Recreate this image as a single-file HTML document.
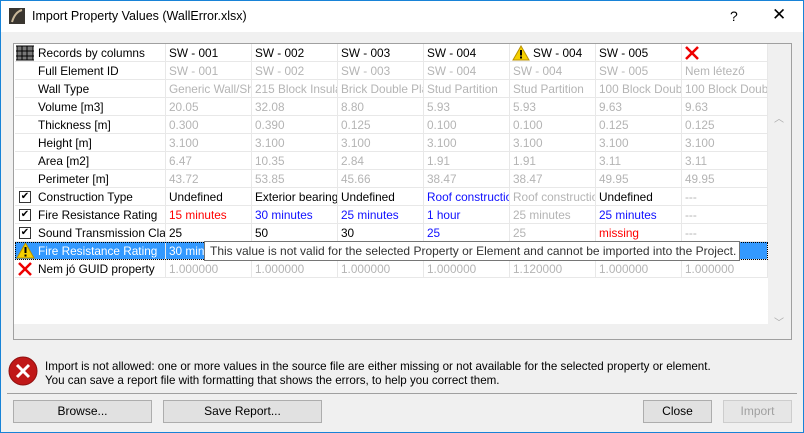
<!DOCTYPE html>
<html><head><style>
*{margin:0;padding:0;box-sizing:border-box}
body{width:804px;height:433px;overflow:hidden;background:#f0f0f0;font-family:"Liberation Sans",sans-serif;font-size:12px;position:relative}
.win{position:absolute;left:0;top:0;width:804px;height:433px;border:1px solid #1883d7;background:#f0f0f0}
.title{position:absolute;left:0;top:0;width:802px;height:31px;background:#fff}
.title span{position:absolute;left:31px;top:8px;font-size:12.5px;color:#000}
.abs{position:absolute}
.grid{position:absolute;left:12px;top:42px;width:779px;height:297px;border:1px solid #a0a0a0;background:#fff;overflow:hidden}
.row{position:absolute;left:1px;height:18px;width:752px}
.c{position:absolute;top:0;height:18px;line-height:18px;white-space:nowrap;overflow:hidden;border-right:1px solid #e8e8e8;border-bottom:1px solid #e8e8e8;padding-left:3px;font-size:11.8px}
.lab{left:20px;width:131px;color:#000;padding-left:3px}
.ic{left:0;width:20px}
.g{color:#b4b4b4}.b{color:#1010ff}.r{color:#ff0000}.k{color:#000}
.btn{position:absolute;height:23px;border:1px solid #adadad;background:#e1e1e1;text-align:center;line-height:21px;font-size:12px}
.chk{position:absolute;left:4px;top:3px;width:12px;height:12px;border:1px solid #333;background:#fff;font-size:10px;line-height:10px;text-align:center}
</style></head><body>
<div class="win">
<div class="title">
<svg class="abs" style="left:8px;top:7px" width="16" height="16"><rect width="16" height="16" fill="#3a3630"/><path d="M3 14 Q6 4 13 2" stroke="#c9b89a" stroke-width="2" fill="none"/></svg>
<span>Import Property Values (WallError.xlsx)</span>
<div class="abs" style="left:729px;top:7px;font-size:14px">?</div>
<div class="abs" style="left:771px;top:4px;font-size:17px">✕</div>
</div>
<div class="grid">
<div id="rows"></div>
<div class="abs" style="left:754px;top:0;width:24px;height:295px;background:#f0f0f0"></div>
<div class="abs" style="left:760px;top:66px;color:#aaa;font-size:10px">︿</div>
<div class="abs" style="left:760px;top:270px;color:#aaa;font-size:10px">﹀</div>
<div class="abs" style="left:0;top:280px;width:754px;height:16px;background:#f0f0f0"></div>
</div>
<svg class="abs" style="left:7px;top:355px" width="30" height="30"><circle cx="15" cy="15" r="14" fill="#c01818" stroke="#901010"/><path d="M9 9L21 21M21 9L9 21" stroke="#fff" stroke-width="3"/></svg>
<div class="abs" style="left:44px;top:359px;line-height:14px;font-size:11.6px">Import is not allowed: one or more values in the source file are either missing or not available for the selected property or element.<br>You can save a report file with formatting that shows the errors, to help you correct them.</div>
<div class="abs" style="left:6px;top:392px;width:790px;height:1px;background:#a0a0a0"></div>
<div class="btn" style="left:12px;top:399px;width:139px">Browse...</div>
<div class="btn" style="left:162px;top:399px;width:159px">Save Report...</div>
<div class="btn" style="left:642px;top:399px;width:69px">Close</div>
<div class="btn" style="left:722px;top:399px;width:69px;color:#a0a0a0;background:#e6e6e6;border-color:#cdcdcd">Import</div>
</div>
<script>
var R=[
["h","Records by columns",[["k","SW - 001"],["k","SW - 002"],["k","SW - 003"],["k","SW - 004"],["w","SW - 004"],["k","SW - 005"],["x",""]]],
["","Full Element ID",[["g","SW - 001"],["g","SW - 002"],["g","SW - 003"],["g","SW - 004"],["g","SW - 004"],["g","SW - 005"],["g","Nem létező"]]],
["","Wall Type",[["g","Generic Wall/Shell"],["g","215 Block Insulated"],["g","Brick Double Plaster"],["g","Stud Partition"],["g","Stud Partition"],["g","100 Block Double"],["g","100 Block Double"]]],
["","Volume [m3]",[["g","20.05"],["g","32.08"],["g","8.80"],["g","5.93"],["g","5.93"],["g","9.63"],["g","9.63"]]],
["","Thickness [m]",[["g","0.300"],["g","0.390"],["g","0.125"],["g","0.100"],["g","0.100"],["g","0.125"],["g","0.125"]]],
["","Height [m]",[["g","3.100"],["g","3.100"],["g","3.100"],["g","3.100"],["g","3.100"],["g","3.100"],["g","3.100"]]],
["","Area [m2]",[["g","6.47"],["g","10.35"],["g","2.84"],["g","1.91"],["g","1.91"],["g","3.11"],["g","3.11"]]],
["","Perimeter [m]",[["g","43.72"],["g","53.85"],["g","45.66"],["g","38.47"],["g","38.47"],["g","49.95"],["g","49.95"]]],
["c","Construction Type",[["k","Undefined"],["k","Exterior bearing"],["k","Undefined"],["b","Roof construction"],["g","Roof construction"],["k","Undefined"],["g","---"]]],
["c","Fire Resistance Rating",[["r","15 minutes"],["b","30 minutes"],["b","25 minutes"],["b","1 hour"],["g","25 minutes"],["b","25 minutes"],["g","---"]]],
["c","Sound Transmission Class",[["k","25"],["k","50"],["k","30"],["b","25"],["g","25"],["r","missing"],["g","---"]]],
["s","Fire Resistance Rating",[["s","30 minutes"],["s",""],["s",""],["s",""],["s",""],["s",""],["s",""]]],
["x","Nem jó GUID property",[["g","1.000000"],["g","1.000000"],["g","1.000000"],["g","1.000000"],["g","1.120000"],["g","1.000000"],["g","1.000000"]]]
];
var warn='<svg width="19" height="17" style="position:absolute;left:1px;top:0"><path d="M9.5 1L18 16H1Z" fill="#f5d000" stroke="#b89000"/><rect x="8.5" y="5" width="2" height="6" fill="#000"/><rect x="8.5" y="12.5" width="2" height="2" fill="#000"/></svg>';
var xx='<svg width="16" height="16" style="position:absolute;left:2px;top:1px"><path d="M2 2L14 14M14 2L2 14" stroke="#e00" stroke-width="2.5"/></svg>';
var grid='<svg width="18" height="16" style="position:absolute;left:1px;top:1px"><rect x="1" y="1" width="16" height="14" fill="#777"/><path d="M1 1V15M6 1V15M11 1V15M17 1V15M0 1H18M0 6H18M0 11H18M0 15H18" stroke="#000" stroke-width="1" fill="none"/></svg>';
var h='';
R.forEach(function(r,i){
 var t=i*18, sel=r[0]=="s", bg=sel?"#3399ff":"";
 h+='<div class="row" style="top:'+t+'px">';
 var icon=r[0]=="h"?grid:r[0]=="c"?'<div class="chk">✔</div>':r[0]=="s"?warn:r[0]=="x"?xx:'';
 var lbg=sel?bg:'#fff';
 h+='<div class="c ic" style="background:'+lbg+';border-right:none">'+icon+'</div>';
 h+='<div class="c lab" style="background:'+lbg+';'+(sel?'color:#fff':'')+'">'+r[1]+'</div>';
 r[2].forEach(function(c,j){
  var l=151+j*86, cl=c[0], inner=c[1], st='left:'+l+'px;width:86px;';
  if(sel){st+='background:#3399ff;color:#fff;';}
  if(cl=="w"){inner='<svg width="18" height="16" style="position:absolute;left:2px;top:1px"><path d="M9 1L17 15H1Z" fill="#f5d000" stroke="#b89000"/><rect x="8" y="5" width="2" height="5.5"/><rect x="8" y="11.5" width="2" height="2"/></svg><span style="margin-left:20px">'+inner+'</span>';cl="k";}
  if(cl=="x"){inner=xx;}
  h+='<div class="c '+cl+'" style="'+st+'">'+inner+'</div>';
 });
 if(sel)h+='<div style="position:absolute;left:0;top:0;width:753px;height:18px;border:1px dotted #000"></div>';
 h+='</div>';
});
document.getElementById('rows').innerHTML=h;
</script>
<div class="abs" style="left:204px;top:241px;width:536px;height:20px;background:#fff;border:1px solid #767676;line-height:18px;padding-left:5px;font-size:12px;color:#333;white-space:nowrap">This value is not valid for the selected Property or Element and cannot be imported into the Project.</div>
</body></html>
